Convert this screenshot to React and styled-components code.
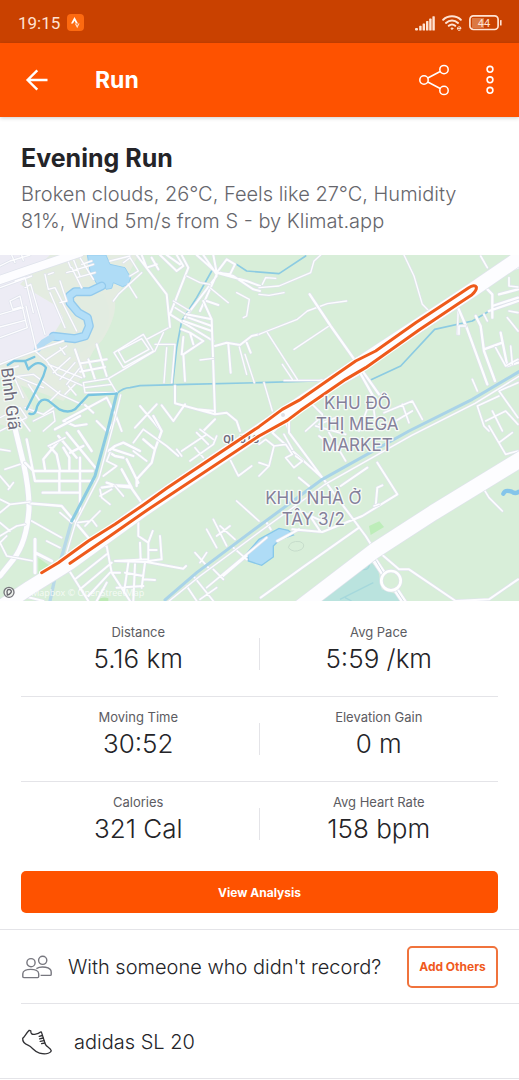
import React from 'react';
import styled, { createGlobalStyle } from 'styled-components';

const colors = {
    orange: '#fe5200',
    darkOrange: '#c94100',
    dark: '#242428',
    text: '#38383c',
    grey: '#66666c',
    label: '#5c5c62',
    line: '#e4e4e8',
    white: '#ffffff',
};

const GlobalStyle = createGlobalStyle`
    * {
        box-sizing: border-box;
    }
    body {
        margin: 0;
        background-color: ${colors.white};
        color: ${colors.dark};
        font-family: Inter, 'Liberation Sans', sans-serif;
    }
    h1, h2, p, dl, dt, dd {
        margin: 0;
    }
    button {
        font-family: inherit;
        cursor: pointer;
    }
`;

const Page = styled.div`
    display: flex;
    flex-direction: column;
`;
const StatusBar = styled.div`
    display: flex;
    align-items: center;
    justify-content: space-between;
    height: 43px;
    padding: 3px 17px 0 18px;
    background-color: ${colors.darkOrange};
    color: #ffe3d3;
`;
const StatusGroup = styled.div`
    display: flex;
    align-items: center;
    gap: 7px;
`;
const Clock = styled.span`
    font-family: Roboto, sans-serif;
    font-size: 17px;
    line-height: 20px;
`;
const AppBar = styled.header`
    position: relative;
    display: flex;
    align-items: center;
    height: 74px;
    padding: 0 14px 0 21px;
    background-color: ${colors.orange};
    box-shadow: 0 1px 4px rgba(0, 0, 0, 0.2);
    color: ${colors.white};
`;
const IconButton = styled.button`
    display: flex;
    align-items: center;
    justify-content: center;
    width: ${props => props.$width}px;
    height: 40px;
    padding: 0;
    border: none;
    background: none;
    color: inherit;
`;
const BarTitle = styled.h1`
    flex: 1;
    padding-left: 42px;
    font-size: 23px;
    line-height: 28px;
    font-weight: 700;
`;
const BarActions = styled.div`
    display: flex;
    gap: 25px;
`;
const Summary = styled.section`
    padding: 25px 21px 20px 21px;
`;
const ActivityName = styled.h2`
    font-size: 25px;
    line-height: 32px;
    font-weight: 700;
`;
const Description = styled.p`
    margin-top: 7px;
    font-size: 20px;
    line-height: 27px;
    font-weight: 300;
    color: ${colors.grey};
`;
const MapView = styled.svg`
    display: block;
    width: 100%;
    height: auto;
`;
const AreaLabel = styled.text`
    font-family: Inter, sans-serif;
    font-size: 51px;
    text-anchor: middle;
    fill: #85819a;
    stroke: #f6faf8;
    stroke-width: 8px;
    stroke-linejoin: round;
    paint-order: stroke;
`;
const StreetLabel = styled(AreaLabel)`
    font-family: Roboto, sans-serif;
    font-size: ${props => props.$size}px;
    text-anchor: start;
    fill: #6f6c7c;
`;
const Attribution = styled.text`
    font-family: 'Open Sans', sans-serif;
    font-size: 27px;
    fill: #ffffff;
    opacity: 0.75;
`;
const Stats = styled.dl`
    padding: 11px 21px 0 21px;
`;
const StatsRow = styled.div`
    display: grid;
    grid-template-columns: 1fr 1fr;
    height: 85px;
    border-bottom: 1px solid ${colors.line};
    &:last-child {
        border-bottom: none;
    }
`;
const Stat = styled.div`
    position: relative;
    padding: 10px 4px 0 0;
    text-align: center;
    & + & {
        padding-right: 0;
    }
    & + &::before {
        content: '';
        position: absolute;
        top: 26px;
        left: -1px;
        width: 1px;
        height: 32px;
        background-color: ${colors.line};
    }
`;
const StatLabel = styled.dt`
    font-size: 13px;
    line-height: 20px;
    color: ${colors.label};
`;
const StatValue = styled.dd`
    margin-top: 1px;
    font-size: 26px;
    line-height: 32px;
    font-weight: 300;
`;
const AnalysisBlock = styled.div`
    padding: 4px 21px 16px 21px;
    border-bottom: 1px solid ${colors.line};
`;
const Button = styled.button`
    height: 42px;
    width: ${props => props.$outlined ? '91px' : '100%'};
    padding: 0;
    border: ${props => props.$outlined ? '2px solid #f0733c' : 'none'};
    border-radius: 5px;
    background-color: ${props => props.$outlined ? colors.white : colors.orange};
    color: ${props => props.$outlined ? '#f05a1c' : colors.white};
    font-size: 12px;
    font-weight: 700;
    white-space: nowrap;
`;
const Row = styled.div`
    display: flex;
    align-items: center;
    gap: ${props => props.$gap}px;
    height: ${props => props.$height}px;
    margin-left: ${props => props.$inset ? '21px' : '0'};
    padding: ${props => props.$inset ? '2px 21px 0 0' : '0 21px'};
`;
const Divider = styled.hr`
    width: auto;
    height: 1px;
    margin: 0 0 0 ${props => props.$inset ? '21px' : '0'};
    border: none;
    background-color: ${colors.line};
`;
const RowText = styled.p`
    flex: 1;
    font-size: 20px;
    line-height: 26px;
    font-weight: 300;
    color: ${colors.dark};
    white-space: nowrap;
`;

const stats = [
    [['Distance', '5.16 km'], ['Avg Pace', '5:59 /km']],
    [['Moving Time', '30:52'], ['Elevation Gain', '0 m']],
    [['Calories', '321 Cal'], ['Avg Heart Rate', '158 bpm']],
];

const StravaBadge = () => (
    <svg width="17" height="18" viewBox="0 0 17 18">
        <rect y="0" width="17" height="17" rx="4" fill="#fd6a10" />
        <path d="M4 9.5L7.5 3L11 9.5H9L7.5 6.7L6 9.5Z" fill="#fff" />
        <path d="M7.7 9.5H9L10.2 11.6L11.2 9.5H12.6L10.2 14.2Z" fill="#ffd9c2" />
    </svg>
);
const Signal = () => (
    <svg width="20" height="15" viewBox="0 0 20 15" fill="currentColor">
        <rect x="0" y="12" width="3" height="2.5" rx="1" />
        <rect x="4.2" y="9.8" width="2.4" height="4.7" rx="0.6" />
        <rect x="7.6" y="7.5" width="2.4" height="7" rx="0.6" />
        <rect x="11" y="5" width="2.4" height="9.5" rx="0.6" />
        <rect x="14.2" y="2.6" width="2.4" height="11.9" rx="0.6" />
        <rect x="17.4" y="0.2" width="2.4" height="14.3" rx="0.6" />
    </svg>
);
const Wifi = () => (
    <svg width="20" height="16" viewBox="0 0 20 16" fill="none" stroke="currentColor" strokeWidth="2" strokeLinecap="round">
        <path d="M1.2 4.8C6 .2 14 .2 18.8 4.8M4 7.9C7.4 4.8 12.6 4.8 16 7.9M6.8 10.8C8.7 9.2 11.3 9.2 13.2 10.8" />
        <circle cx="10" cy="13.6" r="0.8" fill="currentColor" strokeWidth="1" />
        <path d="M15.6 13.6H19A1.8 1.8 0 1 0 18.2 15.1" strokeWidth="1" />
    </svg>
);
const Battery = () => (
    <svg width="33" height="16" viewBox="0 0 33 16">
        <rect x="3" y="3" width="12" height="10" fill="#e3905f" opacity="0.7" />
        <rect x="0.9" y="0.9" width="28.2" height="13.6" rx="3.5" fill="none" stroke="currentColor" strokeWidth="1.7" />
        <rect x="31" y="5" width="1.6" height="5.5" rx="0.6" fill="currentColor" />
        <text x="15" y="12" textAnchor="middle" fontFamily="Roboto, sans-serif" fontSize="11" fill="currentColor">44</text>
    </svg>
);
const BackArrow = () => (
    <svg width="24" height="24" viewBox="0 0 24 24" fill="none" stroke="currentColor" strokeWidth="2.4">
        <path d="M22.5 12H3.2M12.3 2.3L2.6 12L12.3 21.7" />
    </svg>
);
const Share = () => (
    <svg width="32" height="32" viewBox="0 0 32 32" fill="none" stroke="currentColor" strokeWidth="1.5">
        <circle cx="6" cy="16" r="4.2" />
        <circle cx="26" cy="5.6" r="4.2" />
        <circle cx="26" cy="26.4" r="4.2" />
        <path d="M9.8 14L22.2 7.5M9.8 18L22.2 24.5" />
    </svg>
);
const More = () => (
    <svg width="10" height="30" viewBox="0 0 10 30" fill="none" stroke="currentColor" strokeWidth="1.6">
        <circle cx="5" cy="4.3" r="2.9" />
        <circle cx="5" cy="14.8" r="2.9" />
        <circle cx="5" cy="25.3" r="2.9" />
    </svg>
);
const People = () => (
    <svg width="32" height="26" viewBox="0 0 32 26" fill="none" stroke="#77777f" strokeWidth="1.4" strokeLinejoin="round">
        <circle cx="10" cy="8.7" r="4.1" />
        <circle cx="21.7" cy="6.3" r="4.1" />
        <path d="M1.8 22.5V19.7C1.8 13.9 17.7 13.9 17.7 19.7V22.5Q17.7 23.6 16.6 23.6H2.9Q1.8 23.6 1.8 22.5Z" />
        <path d="M15.4 14.6C20 11.8 30.2 12.8 30.2 18V20.4Q30.2 21.4 29.2 21.4H19.6" />
    </svg>
);
const Shoe = () => (
    <svg width="32" height="26" viewBox="0 0 32 26" fill="none" stroke="#303034" strokeWidth="1.3" strokeLinecap="round" strokeLinejoin="round">
        <path d="M8.2 1.3C5 4.5 3.8 7.4 1.7 9.3C1.4 12.4 3.6 15 7.4 16.4C11.4 18 13 22.7 18.5 24.1C23 25.2 28.8 25.1 30.3 21.8C29.6 18.7 25.8 18.2 24.4 15.4L20.5 3.4Q20.2 2.7 19.5 3.1C18 4.4 16.6 4.9 14.6 5.1C10.9 5.8 9.6 4.8 9.8 1.9Z" />
        <path d="M18.2 7.3L21.3 6.5M18.6 9.9L22.2 9M19.2 12.3L23 11.6M20.6 14.6L23.8 14" />
    </svg>
);

// pale casing first, white fill on top
const Roads = ({ d, width = 6 }) => (
    <g fill="none" strokeLinecap="round" strokeLinejoin="round">
        <path d={d} stroke="#dfe3ec" strokeWidth={width + 4} />
        <path d={d} stroke="#fdfdff" strokeWidth={width} />
    </g>
);
const Stream = ({ d, width = 5, color = '#8ccbe2' }) => (
    <path d={d} fill="none" stroke={color} strokeWidth={width} strokeLinecap="round" strokeLinejoin="round" />
);

const route = 'M125 965L175 935L265 870L345 820L430 762L500 712L777 527L847 475L902 445L1067 330L1127 300L1247 215L1377 130L1405 111Q1424 99 1429 108Q1431 118 1416 131L1377 157L1257 237L1097 350L1037 385L902 478L862 508L777 555L520 725L430 785L330 855L210 937';

const RouteMap = () => (
    <MapView viewBox="0 12 1557 1039" role="img" aria-label="Route map">
        <rect y="12" width="1557" height="1040" fill="#d8eed9" />
        <path d="M0 12H415L345 150Q350 200 305 270Q270 300 250 375L190 450L0 380Z" fill="#e4ece1" />
        <path d="M0 12H150L60 100L170 165L210 240L160 250L105 300L0 335Z" fill="#edecf5" />
        <path d="M240 120L310 130Q350 200 300 260L220 320L130 300Z" fill="#e2ece1" />
        <path d="M0 420L60 400L100 470L60 540L0 520Z" fill="#e4ece1" />
        <path d="M115 920L150 945L115 975Z" fill="#c3ecc0" />
        <path d="M290 1051Q305 1035 325 1042L325 1052Z" fill="#bdeab5" />
        <path d="M1107 825L1138 811L1152 828L1112 852Z" fill="#bdedb9" />
        <path d="M945 1052L1107 925L1135 960L1145 1015L1190 1030L1210 1052Z" fill="#bae3de" />
        <path d="M1037 990Q1065 965 1085 955Q1110 960 1108 935M1020 1045L1120 995M1035 1040L1055 1050" fill="none" stroke="#a5d8dc" strokeWidth="4" />

        <path d="M262 12H318L330 40L375 50L392 80L385 100L368 107L340 95L335 112L318 115L312 100L290 98L270 60Z" fill="#afdcf6" stroke="#98cff0" strokeWidth="3" />
        <Stream width={27} color="#93caed" d="M305 105L270 122L225 122L208 135L210 155L235 185L262 200L268 225L255 255L225 263L160 256" />
        <Stream width={19} color="#b2def8" d="M305 105L270 122L225 122L208 135L210 155L235 185L262 200L268 225L255 255L225 263L160 256" />
        <Stream width={20} color="#b5dbf3" d="M155 260L130 275L112 295" />
        <path d="M742 905L777 865L837 832L865 838L880 852L840 865L820 885V918L785 943L745 930Z" fill="#afdcf6" stroke="#88c8e9" strokeWidth="4" />
        <Stream width={13} color="#84c5ea" d="M1510 728Q1515 715 1535 722Q1545 730 1557 722" />
        <path d="M865 890Q870 868 900 872Q920 880 905 895Q880 908 865 890Z" fill="none" stroke="#c6dccb" strokeWidth="3" />

        <Stream width={10} color="#b8d9e8" d="M215 810L190 900L165 980L150 1050" />
        <Stream d="M350 428Q370 410 390 410L420 404L560 400L777 395L950 390M635 60L590 140L545 210L530 290L518 400M710 40L740 60L837 68L917 15M1110 388L1202 345L1304 235L1417 210L1477 175L1557 150" />

        {/* north west */}
        <Roads width={4} d="M0 45L30 30L90 12M35 12L45 35M65 12L70 28M30 150L60 135L78 215L82 230L0 260M0 190L70 170M0 228L75 208M30 150L38 175L62 168M95 75L0 110M45 90L75 80L100 185M75 110L92 100L135 250M135 70L145 115L165 110L230 240M150 125L195 230M180 90L200 150L180 155M215 50L245 110M200 65L280 40M230 80L285 65M220 25L240 75M235 12L280 85M245 40L275 30M200 20L212 50M78 165L110 300M145 70L160 65" />
        <Roads width={4} d="M0 340L50 320L105 300L140 330L170 370L250 405M105 300L145 285L190 270M140 325L200 285M145 340L245 380M180 290L195 310M210 320L160 365M225 335L180 385M240 350L200 400M30 350L70 440M10 360L55 345M20 380L100 370L180 430L245 460M85 400L120 450M45 375L130 410M205 405L228 432M195 430L225 400M180 420L150 450M340 150L355 130L425 65M385 100L410 140M330 30L390 15M370 35L390 20L415 60M390 75L415 60" />
        <Roads d="M225 295L253 377M243 337L320 325M240 362L315 348M290 280L320 375M265 325L285 385" />
        <Roads width={4} d="M342 305L430 250L460 300L370 350ZM355 300L425 263L447 295L375 335ZM440 265L510 228M465 300L490 245M465 280H525L515 395M500 290L492 395M465 300L325 383L250 395M250 395L255 425H350L325 383M255 410L335 400M0 500L60 470L80 500L0 540M75 470L130 490L160 470M100 510L160 480L165 510L130 540M60 500L90 540" />
        <Roads d="M410 12L500 130L510 228M425 12L440 50L470 40M455 20L475 55M545 12L565 50L510 190M480 12L530 60L550 45L530 12M500 12L540 40M590 12L650 65L740 90L780 105M610 12L650 70M640 12L650 65L680 25L705 40L690 70L650 65M650 70L600 180M650 75L555 200M660 65L700 75L760 115L780 120M510 190L550 215L640 270" />
        <Roads width={4} d="M560 75L600 95L630 100M630 110L685 155M710 125L748 145L740 195L730 200M520 150L570 180M525 170L565 195" />
        <Roads d="M560 190L635 205M565 200L635 225M550 210L635 240M610 150L635 205L645 490M620 150L655 162M545 235L570 245L610 270L550 310L555 390M570 245L580 280M550 258L545 310M645 285L680 275L720 282L755 255L777 250M685 280L692 365M740 275L752 305M645 490L525 457V405M645 490L680 485L710 510L720 540M590 475L645 480M645 505L610 540M485 463L520 510M520 510L555 460" />
        <Roads width={4} d="M718 288L740 370M735 310L763 395M600 327L640 322" />
        <Roads d="M190 510L320 440L350 500L325 540M255 462L280 485M190 510L225 525L260 520M290 510L320 540M420 465L480 535M470 460L405 530M365 540L350 500" />

        {/* north east */}
        <g transform="translate(777 0)">
            <Roads width={4} d="M185 12L165 30L155 65L60 105L0 110M10 100L20 80L50 82M0 130L30 133L75 125M0 250L25 240L115 205L145 180L205 158L263 150M25 245L115 385M105 295L210 225M70 340L100 385M75 388H180L300 370M15 395L40 480M230 410L310 365M435 12L465 75L490 160L510 180M598 165L595 250" />
            <Roads width={7} d="M152 130L215 225L360 430M300 360L345 440M595 165L625 235L685 400M650 195L665 225L675 300L708 390M675 295L730 275M725 245L745 345L777 335M690 180L777 150M700 165L777 140M680 110L700 130L700 200M720 130L777 115" />
            <Roads width={5} d="M600 225H620M600 225V250M665 15L685 50M750 60L777 50M750 80V105L777 108M675 190L685 210M750 180L777 185M745 200L777 240M710 290L740 345L777 325M755 285L760 340M640 385L655 420M655 465L720 435M655 465L675 525L690 540M720 420L777 395M720 420L777 500M680 510L740 480L777 520M700 480L730 540" />
            <Roads width={5} d="M375 485L460 450L490 505M410 510L460 480M430 460L450 515M140 540L190 495M180 520L230 500M70 490L90 540M160 460L190 490M340 440L350 520M300 540L330 460L370 440" />
        </g>

        {/* south west */}
        <g transform="translate(0 525)">
            <Roads width={15} d="M36 -30L48 20L70 110Q88 190 87 250Q80 350 40 400L0 450" />
            <Roads width={7} d="M80 40L105 165H280M75 110L100 135H278M240 95V265M128 200H240M178 135V200M135 130L130 100L180 40M148 60L170 85L180 132M190 65L208 95V130M200 20L290 130M175 30L230 95M235 15L275 75M165 10L240 -30M250 60L210 80M90 232L185 240L265 335M325 75L345 60L370 50L420 75M340 70L400 90M330 80L345 90L370 95M430 40L465 70L485 15L460 -30M465 70L455 110L410 160V180M380 100L415 170M305 185L350 178L390 180L425 230M365 130L395 185L350 180L320 170" />
            <Roads width={5} d="M0 70L30 75M0 150L30 185M40 170L25 190M15 130L60 115M0 220L30 235L90 228M30 235L0 260M0 290L30 315M0 330L50 300L75 295M20 330L0 350L20 390L100 405M95 285L185 335M140 345L180 365M145 60L195 35M310 150L350 120L320 105L330 80M300 190L305 215L330 235M300 210L335 190M345 180L370 210M230 290L270 285L300 255M255 300L275 280L290 300M180 260L215 290M400 75L440 105M430 10L500 60L535 90M400 50L430 10" />
            <Roads width={9} d="M105 340V440M105 380L155 405" />
            <Roads d="M415 290V330L445 350V400L345 405M445 350L458 315M420 350L422 400M480 330L485 400L445 405M445 372H470M345 405L440 408L550 428L558 420M385 410L372 500M405 415L400 525M435 410L425 485M260 360L320 360L335 440L390 525M205 430L265 525M225 460L320 385M240 490L335 410M265 510L330 440M335 440H360M350 485L430 480M430 460L465 462M290 525L320 470M70 510L130 525M375 440L430 450" />
            <Roads width={5} d="M545 75L590 45L620 25M570 105L640 55L650 30M590 20L625 55M600 10L640 40M690 100L715 150L755 120M545 90L530 70M585 65L610 95M710 225L777 285M640 280L680 360M620 310L650 365M660 300L705 340M650 330L690 300M585 380L625 425M600 410L620 380M560 480L590 525M580 450L640 525M600 520L650 485M640 430L670 460M670 450L740 390M700 365L740 400M620 485L800 335" />
        </g>

        {/* south east */}
        <g transform="translate(777 525)">
            <Roads d="M60 0L40 20L190 155L320 330L345 370M90 -20V20L190 155M20 285L35 310M120 155L150 180M100 310L190 318L310 270L415 205L355 110M245 180L325 125M350 240L355 185L370 178M110 250L200 290M150 265L185 318M55 345L120 310M5 515L130 425L300 305M350 370L420 430L450 430L590 525L690 520L777 460" />
            <Roads width={5} d="M0 150L30 120L45 60L20 40L0 55M30 120L0 110M45 60L80 55L100 85L80 95L105 125L130 105L110 90M75 25L100 70M210 20L260 105M180 30L240 75M170 0L260 25M690 0L740 85L777 75M720 50L760 20M675 190L690 215L730 255M345 240L360 235" />
            <Roads width={16} d="M335 385L375 445M410 490L440 535" />
            <path d="M345 395L375 445M410 490L440 535" stroke="#d5dde5" strokeWidth="3" />
            <circle cx="396" cy="464" r="29" fill="#d8eed9" stroke="#dfe3ec" strokeWidth="12" />
            <circle cx="396" cy="464" r="29" fill="none" stroke="#fff" strokeWidth="8" />
        </g>

        {/* canals with the lane that runs beside them */}
        <Roads width={4} d="M505 1052L600 975L785 838L975 700L1235 553L1425 457L1557 376M362 432L337 532L297 680L227 815L200 905" />
        <Stream width={9} color="#a9d3e8" d="M495 1047L590 965L777 825L967 685L1227 540L1417 445L1557 362" />
        <Stream width={9} d="M350 428L325 530L285 675L215 810" />
        <Stream width={7} color="#79c5e1" d="M23 342L42 330H75L103 318M75 330L85 355Q115 320 138 350L130 375L80 475M88 488Q107 495 111 467Q123 438 145 449L178 475Q205 488 225 475L265 432L350 428" />

        <Roads width={25} d="M-10 90L100 52L240 5" />
        <Roads width={46} d="M900 1070L1122 900L1300 785L1570 620" />
        <Roads width={42} d="M0 1070L90 1010L210 935L430 775L777 541L920 445L1100 325L1415 118L1570 12" />
        <StreetLabel $size={33} x="670" y="575" fontWeight="600">QL 51C</StreetLabel>
        <path d={route} fill="none" stroke="#fff" strokeWidth="16" strokeLinecap="round" strokeLinejoin="round" />
        <path d={route} fill="none" stroke="#ee5a1b" strokeWidth="9" strokeLinecap="round" strokeLinejoin="round" />
        <circle cx="849" cy="492" r="6" fill="#dfe0e6" />

        <AreaLabel x="1072" y="475">KHU ĐÔ</AreaLabel>
        <AreaLabel x="1072" y="538">THỊ MEGA</AreaLabel>
        <AreaLabel x="1072" y="601">MARKET</AreaLabel>
        <AreaLabel x="940" y="759">KHU NHÀ Ở</AreaLabel>
        <AreaLabel x="940" y="822">TÂY 3/2</AreaLabel>
        <StreetLabel $size={51} transform="translate(3 352) rotate(83)">Bình Giã</StreetLabel>

        <circle cx="27" cy="1024" r="15" fill="#eef2ee" stroke="#77777d" strokeWidth="4" />
        <path d="M22 1032L21 1021Q23 1014 30 1016Q37 1020 32 1026Q28 1031 22 1032Z" fill="none" stroke="#66666c" strokeWidth="4" />
        <Attribution x="64" y="1034">© Mapbox © OpenStreetMap</Attribution>
    </MapView>
);

function App() {
    return (
        <Page>
            <GlobalStyle />
            <StatusBar>
                <StatusGroup>
                    <Clock>19:15</Clock>
                    <StravaBadge />
                </StatusGroup>
                <StatusGroup>
                    <Signal />
                    <Wifi />
                    <Battery />
                </StatusGroup>
            </StatusBar>
            <AppBar>
                <IconButton $width={32} aria-label="Back"><BackArrow /></IconButton>
                <BarTitle>Run</BarTitle>
                <BarActions>
                    <IconButton $width={32} aria-label="Share"><Share /></IconButton>
                    <IconButton $width={30} aria-label="More options"><More /></IconButton>
                </BarActions>
            </AppBar>
            <Summary>
                <ActivityName>Evening Run</ActivityName>
                <Description>
                    Broken clouds, 26°C, Feels like 27°C, Humidity 81%, Wind 5m/s from S - by Klimat.app
                </Description>
            </Summary>
            <RouteMap />
            <Stats>
                {stats.map((row, i) => (
                    <StatsRow key={i}>
                        {row.map(([label, value]) => (
                            <Stat key={label}>
                                <StatLabel>{label}</StatLabel>
                                <StatValue>{value}</StatValue>
                            </Stat>
                        ))}
                    </StatsRow>
                ))}
            </Stats>
            <AnalysisBlock>
                <Button>View Analysis</Button>
            </AnalysisBlock>
            <Row $gap={15} $height={73}>
                <People />
                <RowText>With someone who didn't record?</RowText>
                <Button $outlined>Add Others</Button>
            </Row>
            <Divider $inset />
            <Row $inset $gap={21} $height={74}>
                <Shoe />
                <RowText>adidas SL 20</RowText>
            </Row>
            <Divider />
        </Page>
    );
}

export default App;
